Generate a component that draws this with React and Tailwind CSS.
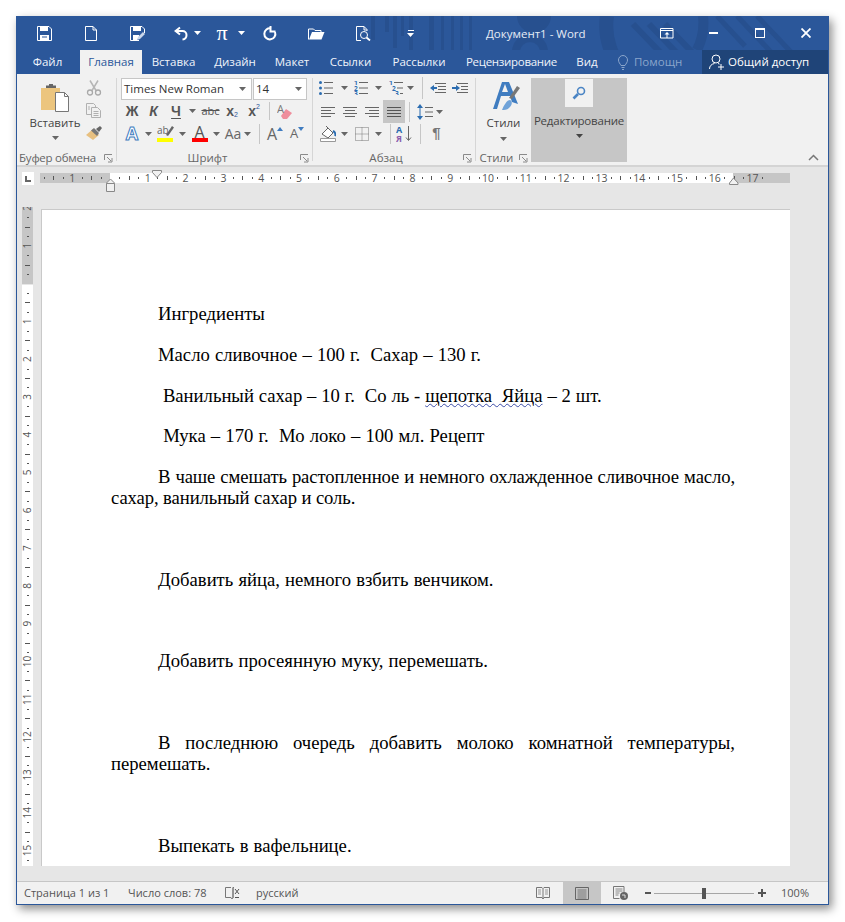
import React from 'react';

const UI = "font-['Open_Sans','Noto_Sans',sans-serif]";

const Ic = ({ w = 16, h = 16, className = '', children }) => (
  <svg width={w} height={h} viewBox={`0 0 ${w} ${h}`} fill="none" className={`shrink-0 ${className}`}>
    {children}
  </svg>
);

const Caret = ({ color = '#666', className = '' }) => (
  <svg width="7" height="4" viewBox="0 0 7 4" className={`shrink-0 ${className}`}>
    <path d="M0 0h7L3.5 4z" fill={color} />
  </svg>
);

const Launcher = () => (
  <svg width="9" height="9" viewBox="0 0 9 9" className="absolute right-[3px] top-[2px]">
    <path d="M.5 6V.5H8M3 3l4 4M8 4v4H4" stroke="#8a8a8a" fill="none" />
  </svg>
);

const Cell = ({ className = '', children }) => (
  <div className={`flex items-center justify-center shrink-0 ${className}`}>{children}</div>
);

const Lines = ({ rows, stroke = '#666' }) => (
  <Ic w={14} h={12}>
    {rows.map(([x1, x2], i) => (
      <path key={i} d={`M${x1} ${1.5 + i * 3}H${x2}`} stroke={stroke} />
    ))}
  </Ic>
);

const Sep = ({ className = '' }) => <div className={`w-px bg-[#c6c6c6] shrink-0 ${className}`} />;

const Titlebar = () => (
  <div className="relative flex h-[34px] items-center overflow-hidden bg-[#2b579a] text-white">
    <svg width="811" height="58" viewBox="0 0 811 58" className="absolute left-0 top-0">
      <g fill="#27508f">
        <path d="M354 0h4v24h-4zM368 0h4v16h-4zM376 0h4v32h-4zM384 0h3v20h-3zM392 0h4v40h-4zM412 0h5v34h-5zM424 0h3v40h-3zM434 0h3v44h-3zM443 0h3v46h-3zM452 0h3v46h-3z" />
        <path d="M500 0h34a17 17 0 0 1-34 0z" />
      </g>
      <g fill="none" stroke="#27508f">
        <circle cx="513" cy="36" r="14" strokeWidth="8" />
        <path d="M590 0a66 66 0 0 0 20 58" strokeWidth="14" />
        <path d="M616 8l48 50M632 8l48 50M648 8l48 50" strokeWidth="6" />
        <path d="M700 0l28 30M720 0l34 36M740 0l34 36" strokeWidth="5" />
        <path d="M686 0a60 60 0 0 1-6 34" strokeWidth="10" />
      </g>
    </svg>

    <div className="relative flex items-center pl-[20px]">
      <Cell className="w-[15px]">
        <Ic w={15} h={15}>
          <path d="M.5.5h11.5l2.5 2.5v11.5H.5z" stroke="#fff" />
          <path d="M3 1h8v4H3zM3 9h9v5H3z" fill="#fff" />
          <path d="M5 11h5" stroke="#2b579a" />
        </Ic>
      </Cell>
      <Cell className="ml-[32px] w-[13px]">
        <Ic w={12} h={15}>
          <path d="M.5.5h7.5l3.5 3.5v10.5H.5zM8 .5V4h3.5" stroke="#fff" />
        </Ic>
      </Cell>
      <Cell className="ml-[33px] w-[15px]">
        <Ic w={15} h={15}>
          <path d="M9 14.500H.5V.5H12l2.500 2.500V7" stroke="#fff" />
          <path d="M3 1h8v4H3zM3 9h6v2l-2 3H3z" fill="#fff" />
          <path d="M7 14l1-3 5-5 2 2-5 5z" fill="#c9d6ea" />
        </Ic>
      </Cell>
      <Cell className="ml-[28px] w-[16px]">
        <Ic w={15} h={15}>
          <path d="M6 1.500L1.500 5 6 8.500" stroke="#fff" strokeWidth="2" />
          <path d="M2 5h6.500a4 4 0 0 1 4 4 4.500 4.500 0 0 1-4 4.500" stroke="#fff" strokeWidth="2" />
        </Ic>
      </Cell>
      <Caret color="#fff" className="ml-[5px]" />
      <Cell className="ml-[14px] w-[14px] h-[16px] font-['Liberation_Serif',serif] text-[22px] leading-none">π</Cell>
      <Caret color="#fff" className="ml-[9px]" />
      <Cell className="ml-[18px] w-[14px]">
        <Ic w={14} h={15}>
          <path d="M8 2.500A5.500 5.500 0 1 0 12 6" stroke="#fff" strokeWidth="2" />
          <path d="M7.500 0v5.500h5" stroke="#fff" strokeWidth="2" />
        </Ic>
      </Cell>
      <Cell className="ml-[31px] w-[17px]">
        <Ic w={17} h={13}>
          <path d="M.5 12.500V2h5l1.500 1.500h6V5" stroke="#fff" />
          <path d="M1 12.500L4 5h12.500l-3 7.500z" fill="#fff" />
        </Ic>
      </Cell>
      <Cell className="ml-[31px] w-[15px]">
        <Ic w={15} h={15}>
          <path d="M5 14.500H.5V.5H8l3 3V5M8 .5V4h3" stroke="#fff" />
          <circle cx="8" cy="9" r="3.500" stroke="#fff" />
          <path d="M10.500 11.500l3.500 3" stroke="#fff" strokeWidth="1.800" />
        </Ic>
      </Cell>
      <Cell className="ml-[36px] w-[7px] flex-col gap-[2px]">
        <div className="h-px w-[6px] bg-white" />
        <Caret color="#fff" />
      </Cell>
    </div>

    <div className={`${UI} absolute left-[469px] top-[10px] text-[11.5px] leading-[16px] text-[#e6ecf5]`}>
      Документ1 - Word
    </div>

    <div className="relative ml-auto flex items-center pr-[17px]">
      <Ic w={14} h={11}>
        <path d="M.5.5h12.500v9.500H.5zM.5 2.500H13" stroke="#fff" />
        <path d="M7 4l2.500 2.500h-5zM6.500 6h1v4h-1z" fill="#fff" />
      </Ic>
      <div className="ml-[35px] h-[2px] w-[9px] bg-white" />
      <div className="ml-[37px] h-[10px] w-[10px] border border-t-2 border-white" />
      <Ic w={10} h={10} className="ml-[36px]">
        <path d="M.5.500l9 9M9.500.5l-9 9" stroke="#fff" strokeWidth="1.800" />
      </Ic>
    </div>
  </div>
);

const tabs = [
  ['Файл', 'w-[63px] pr-[2px]'],
  ['Главная', 'w-[62px] bg-[#f1f1f1] !text-[#2b579a]'],
  ['Вставка', 'w-[63px]'],
  ['Дизайн', 'w-[60px]'],
  ['Макет', 'w-[54px]'],
  ['Ссылки', 'w-[63px]'],
  ['Рассылки', 'w-[74px]'],
  ['Рецензирование', 'w-[111px] tracking-[-0.3px]'],
  ['Вид', 'w-[40px]'],
];

const Tabs = () => (
  <div className={`${UI} relative flex h-[24px] bg-[#2b579a] text-[11.5px] text-[#f0f4fa]`}>
    {tabs.map(([label, cls]) => (
      <div key={label} className={`flex items-center justify-center ${cls}`}>
        {label}
      </div>
    ))}
    <div className="flex w-[95px] items-center pl-[11px] text-[#8aa5cb]">
      <Ic w={10} h={15}>
        <path d="M3 10.500C2 8.500.5 7.500.5 5a4.500 4.500 0 0 1 9 0c0 2.500-1.500 3.500-2.500 5.500zM3.500 12.500h3M4 14.500h2" stroke="#8aa5cb" />
      </Ic>
      <span className="ml-[6px]">Помощн</span>
    </div>
    <div className="flex flex-1 items-center bg-[#1f4478] pl-[7px] text-white">
      <Ic w={16} h={16}>
        <circle cx="7" cy="5" r="4" stroke="#fff" />
        <path d="M.5 15c0-3 2-5 5-5.500M9 9.500l1.500.5M12 10v6M9 13h6" stroke="#fff" />
      </Ic>
      <span className="ml-[3px]">Общий доступ</span>
    </div>
  </div>
);

const Group = ({ label, labelClass = '', launcher, className = '', children }) => (
  <div className={`my-[4px] flex shrink-0 flex-col border-r border-[#d6d6d6] ${className}`}>
    <div className="h-[74px] shrink-0">{children}</div>
    <div className={`relative flex h-[12px] shrink-0 items-center justify-center text-[11.5px] text-[#666] ${labelClass}`}>
      {label}
      {launcher && <Launcher />}
    </div>
  </div>
);

const Clipboard = () => (
  <Group label="Буфер обмена" labelClass="pr-[18px] tracking-[-0.25px]" launcher className="w-[100px]">
    <div className="flex">
      <div className="flex w-[69px] flex-col items-center pl-[7px] pt-[6px]">
        <Ic w={30} h={28}>
          <path d="M1 4h6V2h7v2h6v22H1z" fill="#ecc57e" />
          <path d="M6 4h10V1.500h-3V0H9v1.500H6z" fill="#666" />
          <path d="M15.500 8.500h9l4 4v15h-13z" fill="#fff" stroke="#777" />
          <path d="M24.500 8.500v4h4" stroke="#777" />
        </Ic>
        <div className="mt-[3px] text-[11.500px] leading-[16px] text-[#444]">Вставить</div>
        <Caret className="mt-[5px]" />
      </div>
      <div className="flex flex-col items-start pt-[1px]">
        <Ic w={16} h={16} className="mt-[1px]">
          <path d="M4 .5l6 10M12 .5l-6 10" stroke="#b5b5b5" strokeWidth="1.500" />
          <circle cx="4" cy="12.500" r="2.500" stroke="#a9a9a9" strokeWidth="1.300" />
          <circle cx="12" cy="12.500" r="2.500" stroke="#a9a9a9" strokeWidth="1.300" />
        </Ic>
        <Ic w={15} h={15} className="mt-[7px]">
          <path d="M.5.5h7l2 2v9H.5z" fill="#f1f1f1" stroke="#b0b0b0" />
          <path d="M5.500 4.500h6l3 3v7h-9z" fill="#f1f1f1" stroke="#b0b0b0" />
          <path d="M7.500 8.500h5M7.500 10.500h5M7.500 12.500h5M2 4h2M2 6h2" stroke="#b0b0b0" />
        </Ic>
        <Ic w={16} h={14} className="mt-[8px]">
          <path d="M0 9l7-6 6 6-6 5z" fill="#e8c080" />
          <path d="M5 4.500L8 2l5 5-2 3z" fill="#777" />
          <path d="M10 3l4-3 2 2-3 4z" fill="#666" />
        </Ic>
      </div>
    </div>
  </Group>
);

const FontGroup = () => (
  <Group label="Шрифт" labelClass="pr-[14px]" launcher className="w-[196px]">
    <div className="flex flex-col pl-[4px]">
      <div className="flex h-[22px]">
        <div className="flex w-[131px] items-center justify-between border border-[#c6c6c6] bg-white pl-[2px] pr-[5px] text-[11.500px] text-[#333]">
          Times New Roman
          <Caret />
        </div>
        <div className="ml-px flex w-[54px] items-center justify-between border border-[#c6c6c6] bg-white pl-[2px] pr-[4px] text-[11.500px] text-[#333]">
          14
          <Caret />
        </div>
      </div>
      <div className="flex h-[22px] items-center text-[#555]">
        <Cell className="w-[22px] font-['Liberation_Sans',sans-serif] text-[14px] font-bold">Ж</Cell>
        <Cell className="w-[21px] font-['Liberation_Sans',sans-serif] text-[14px] font-bold italic">К</Cell>
        <Cell className="w-[24px] font-['Liberation_Sans',sans-serif] text-[14px] font-bold underline underline-offset-2">Ч</Cell>
        <Cell className="w-[8px]"><Caret /></Cell>
        <Cell className="w-[29px] font-['Open_Sans',sans-serif] text-[11px] line-through">abc</Cell>
        <Cell className="w-[14px] font-['Liberation_Sans',sans-serif] text-[14px] font-bold">x<span className="text-[7px] font-normal text-[#2b579a] translate-y-[4px]">2</span></Cell>
        <Cell className="ml-[8px] w-[14px] font-['Liberation_Sans',sans-serif] text-[14px] font-bold">x<span className="text-[7px] font-normal text-[#2b579a] -translate-y-[4px]">2</span></Cell>
        <Sep className="ml-[8px] h-[18px]" />
        <Cell className="ml-[7px] w-[16px]">
          <Ic w={16} h={15}>
            <path d="M9 5l6 4-5 6H6l-2-3z" fill="#ef8e9c" />
            <text x="0" y="9" fontSize="11" fill="#777" fontFamily="Open Sans">A</text>
          </Ic>
        </Cell>
      </div>
      <div className="flex h-[23px] items-center text-[#666]">
        <Cell className="w-[22px] font-['Open_Sans',sans-serif] text-[18px] font-bold text-[#fff] [-webkit-text-stroke:1px_#3f7cc0]">A</Cell>
        <Cell className="w-[10px]"><Caret /></Cell>
        <Cell className="ml-[2px] w-[20px] flex-col">
          <Ic w={17} h={12}>
            <text x="0" y="9" fontSize="10" fill="#666" fontFamily="Open Sans">ab</text>
            <path d="M9 10L15 1l2 1.500-6 8.500z" fill="#666" />
          </Ic>
          <div className="mt-[1px] h-[4px] w-[16px] bg-[#ffff00]" />
        </Cell>
        <Cell className="ml-[3px] w-[8px]"><Caret /></Cell>
        <Cell className="ml-[5px] w-[17px] flex-col">
          <div className="h-[13px] text-[16px] leading-[14px] text-[#555]">A</div>
          <div className="h-[4px] w-[16px] bg-[#ff0000]" />
        </Cell>
        <Cell className="ml-[4px] w-[8px]"><Caret /></Cell>
        <Cell className="ml-[3px] w-[20px] text-[14px]">Aa</Cell>
        <Cell className="w-[8px]"><Caret /></Cell>
        <Sep className="ml-[8px] h-[20px]" />
        <Cell className="ml-[6px] w-[18px] items-end text-[16px] leading-none">
          A<span className="mb-[11px] border-x-[3px] border-b-[4px] border-x-transparent border-b-[#3f7cc0]" />
        </Cell>
        <Cell className="ml-[4px] w-[18px] items-end text-[13px] leading-none">
          A<span className="mb-[9px] border-x-[3px] border-t-[4px] border-x-transparent border-t-[#3f7cc0]" />
        </Cell>
      </div>
    </div>
  </Group>
);

const ListIcon = ({ kind }) => (
  <Ic w={16} h={14}>
    {[1.5, 7, 12.5].map((y, i) => {
      if (kind === 'bullet') {
        return (
          <g key={y}>
            <circle cx="1.500" cy={y} r="1.500" fill="#2b6cb0" />
            <path d={`M5 ${y}h9`} stroke="#666" />
          </g>
        );
      }
      const left = kind === 'multi' ? i * 3 : 0;
      return (
        <g key={y}>
          <text x={left} y={y + 2.5} fontSize="6.500" fontWeight="700" fill="#2b6cb0" fontFamily="Open Sans">{i + 1}</text>
          <path d={`M${left + 5} ${y}h${kind === 'multi' ? 14 - left - 5 : 9}`} stroke="#666" />
        </g>
      );
    })}
  </Ic>
);

const Paragraph = () => (
  <Group label="Абзац" labelClass="pr-[16px]" launcher className="w-[163px]">
    <div className="flex flex-col pl-[6px]">
      <div className="mb-[2px] flex h-[20px] items-center">
        <Cell className="w-[16px]"><ListIcon kind="bullet" /></Cell>
        <Cell className="ml-[3px] w-[12px]"><Caret /></Cell>
        <Cell className="ml-[4px] w-[16px]"><ListIcon kind="num" /></Cell>
        <Cell className="ml-[2px] w-[12px]"><Caret /></Cell>
        <Cell className="ml-[4px] w-[18px]"><ListIcon kind="multi" /></Cell>
        <Cell className="w-[8px]"><Caret /></Cell>
        <Sep className="ml-[8px] h-[22px]" />
        <Cell className="ml-[7px] w-[16px]">
          <Ic w={16} h={12}>
            <path d="M5 1.500h11M8 4.500h8M8 7.500h8M5 10.500h11" stroke="#666" />
            <path d="M0 6l4-3v2h3v2H4v2z" fill="#2b6cb0" />
          </Ic>
        </Cell>
        <Cell className="ml-[6px] w-[16px]">
          <Ic w={16} h={12}>
            <path d="M5 1.500h11M9 4.500h7M9 7.500h7M5 10.500h11" stroke="#666" />
            <path d="M8 6L4 3v2H0v2h4v2z" fill="#2b6cb0" />
          </Ic>
        </Cell>
      </div>
      <div className="flex h-[23px] items-center">
        <Cell className="ml-[2px] w-[14px]"><Lines rows={[[0, 14], [0, 10], [0, 14], [0, 10]]} /></Cell>
        <Cell className="ml-[8px] w-[14px]"><Lines rows={[[0, 14], [2, 12], [0, 14], [2, 12]]} /></Cell>
        <Cell className="ml-[8px] w-[14px]"><Lines rows={[[0, 14], [4, 14], [0, 14], [4, 14]]} /></Cell>
        <Cell className="ml-[4px] h-[23px] w-[22px] bg-[#c6c6c6]"><Lines rows={[[0, 14], [0, 14], [0, 14], [0, 14]]} stroke="#555" /></Cell>
        <Sep className="ml-[4px] h-[20px]" />
        <Cell className="ml-[7px] w-[16px]">
          <Ic w={16} h={16}>
            <path d="M3 2v12" stroke="#2b6cb0" />
            <path d="M3 0l3 4H0zM3 16l3-4H0z" fill="#2b6cb0" />
            <path d="M8 3.500h8M8 8h8M8 12.500h8" stroke="#666" />
          </Ic>
        </Cell>
        <Cell className="ml-[1px] w-[10px]"><Caret /></Cell>
      </div>
      <div className="flex h-[21px] items-center">
        <Cell className="ml-[1px] w-[16px]">
          <Ic w={16} h={16}>
            <path d="M2 8l6-6 5 5-5 5z" fill="#fff" stroke="#666" />
            <path d="M6 0l2 2" stroke="#666" />
            <path d="M13 5c2 1 3 3 2 5" stroke="#2b6cb0" strokeWidth="2" />
            <path d="M.5 12.500h15v3H.5z" fill="#fff" stroke="#999" />
          </Ic>
        </Cell>
        <Cell className="ml-[2px] w-[12px]"><Caret /></Cell>
        <Cell className="ml-[4px] w-[16px]">
          <Ic w={14} h={14}>
            <path d="M.5.5h13v13H.5zM7 .5v13M.5 7h13" stroke="#777" strokeDasharray="1 1" />
          </Ic>
        </Cell>
        <Cell className="ml-[2px] w-[12px]"><Caret /></Cell>
        <Sep className="ml-[6px] h-[20px]" />
        <Cell className="ml-[5px] w-[18px]">
          <Ic w={18} h={17}>
            <text x="0" y="8" fontSize="9" fontWeight="700" fill="#2b6cb0" fontFamily="Open Sans">А</text>
            <text x="0" y="16.500" fontSize="9" fontWeight="700" fill="#8a5cad" fontFamily="Open Sans">Я</text>
            <path d="M12.500 1v14M10 12.500l2.500 3 2.500-3" stroke="#666" />
          </Ic>
        </Cell>
        <Sep className="ml-[6px] h-[20px]" />
        <Cell className="ml-[10px] w-[11px] font-['Liberation_Sans',sans-serif] text-[15px] font-bold text-[#777]">¶</Cell>
      </div>
    </div>
  </Group>
);

const Styles = () => (
  <Group label="Стили" labelClass="pr-[14px]" launcher className="w-[55px] !border-r-0">
    <div className="flex flex-col items-center pt-[1px]">
      <Ic w={32} h={32}>
        <path d="M5 30L14 3h7l9 22-6-2-2-6h-9l-4 13z" fill="#3f7cc0" />
        <path d="M14 13h6l-3-8z" fill="#f1f1f1" />
        <path d="M21 19L29 7l3 2-8 11z" fill="#777" />
        <path d="M14 31c2-5 5-10 8-10 3 1 2 6-1 8-2 2-5 2-7 2z" fill="#6fa2d8" />
      </Ic>
      <div className="mt-[4px] text-[11.500px] leading-[16px] text-[#444]">Стили</div>
      <Caret className="mt-[6px]" />
    </div>
  </Group>
);

const Editing = () => (
  <div className="my-[4px] flex h-[84px] w-[96px] shrink-0 flex-col items-center bg-[#c6c6c6]">
    <div className="mt-px flex h-[28px] w-[28px] items-center justify-center bg-[#f1f1f1]">
      <Ic w={14} h={14}>
        <circle cx="9" cy="5" r="3.500" stroke="#4a84c4" strokeWidth="1.600" />
        <path d="M6 8l-4.500 4.500" stroke="#4a84c4" strokeWidth="2.600" />
      </Ic>
    </div>
    <div className="mt-[6px] text-[11.500px] leading-[16px] tracking-[-0.2px] text-[#444]">Редактирование</div>
    <Caret color="#444" className="mt-[5px]" />
  </div>
);

const Ribbon = () => (
  <div className={`${UI} relative flex h-[93px] border-b-2 border-[#d4d4d4] bg-[#f1f1f1]`}>
    <Clipboard />
    <FontGroup />
    <Paragraph />
    <Styles />
    <Editing />
    <svg width="11" height="7" viewBox="0 0 11 7" className="absolute left-[791px] top-[80px]">
      <path d="M1 6l4.500-4.500L10 6" stroke="#777" strokeWidth="1.500" fill="none" />
    </svg>
  </div>
);

const quarter = [];
for (let i = -11; i <= 69; i++) quarter.push(i);

const HRuler = () => {
  const ox = 70;
  const u = 37.8 / 4;
  return (
    <svg width="750" height="26" viewBox="0 0 750 26" className="ml-[23px] shrink-0">
      <rect y="6" width="70" height="10" fill="#c6c6c6" />
      <rect x="70" y="6" width="623" height="10" fill="#fff" />
      <rect x="693" y="6" width="57" height="10" fill="#c6c6c6" />
      {quarter.map((q) => {
        const x = ox + q * u;
        if (x < 1 || x > 748 || q === 0) return null;
        if (q % 4 === 0) {
          return (
            <text key={q} x={x} y="14.500" textAnchor="middle" fontSize="10.500" fill="#555" fontFamily="Open Sans">
              {Math.abs(q / 4)}
            </text>
          );
        }
        if (q % 2 === 0) return <rect key={q} x={Math.round(x)} y="9" width="1" height="4" fill="#555" />;
        return <rect key={q} x={Math.round(x)} y="10" width="1" height="2" fill="#555" />;
      })}
      <path d="M112.500 3.500h9v2l-4.500 5-4.500-5z" fill="#f1f1f1" stroke="#888" />
      <path d="M66.500 16l4-4 4 4v.5h-8z" fill="#f1f1f1" stroke="#888" />
      <path d="M66.500 16.500h8v8h-8z" fill="#f1f1f1" stroke="#888" />
      <path d="M689.500 16l4-5 4.500 5v1.500h-8.500z" fill="#f1f1f1" stroke="#888" />
    </svg>
  );
};

const VRuler = () => {
  const oy = 76.5;
  const u = 37.8 / 4;
  const marks = [];
  for (let q = -8; q <= 61; q++) marks.push(q);
  return (
    <svg width="11" height="659" viewBox="0 0 11 659" className="shrink-0">
      <rect width="11" height="77" fill="#c6c6c6" />
      <rect y="78" width="11" height="581" fill="#fff" />
      {marks.map((q) => {
        const y = oy + q * u;
        if (q === 0) return null;
        if (q % 4 === 0) {
          return (
            <text
              key={q}
              x="5.500"
              y={y + 3.500}
              textAnchor="middle"
              fontSize="10"
              fill="#555"
              fontFamily="Open Sans"
              transform={`rotate(-90 5.500 ${y})`}
            >
              {Math.abs(q / 4)}
            </text>
          );
        }
        if (q % 2 === 0) return <rect key={q} x="3" y={Math.round(y)} width="5" height="1" fill="#555" />;
        return <rect key={q} x="5" y={Math.round(y)} width="2" height="1" fill="#555" />;
      })}
    </svg>
  );
};

const paragraphs = [
  'Ингредиенты',
  'Масло сливочное – 100 г.  Сахар – 130 г.',
  null,
  ' Мука – 170 г.  Мо локо – 100 мл. Рецепт',
  'В чаше смешать растопленное и немного охлажденное сливочное масло, сахар, ванильный сахар и соль.',
  '',
  'Добавить яйца, немного взбить венчиком.',
  '',
  'Добавить просеянную муку, перемешать.',
  '',
  'В последнюю очередь добавить молоко комнатной температуры, перемешать.',
  '',
  'Выпекать в вафельнице.',
];

const Page = () => (
  <div className="mt-[2px] w-[749px] shrink-0 border-l border-t border-[#c9c9c9] bg-white pl-[69px] pr-[55px] pt-[93px] font-['Liberation_Serif',serif] text-[18.67px] leading-[21px] text-black">
    {paragraphs.map((text, i) => (
      <p
        key={i}
        className={`mb-[19.8px] min-h-[21px] whitespace-pre-wrap indent-[47px] text-justify ${
          i === 4 ? 'tracking-[-0.1px]' : i === 2 ? '[word-spacing:0.2px]' : '[word-spacing:0.5px]'
        }`}
      >
        {text === null ? (
          <>
            {' Ванильный сахар – 10 г.  Со ль - '}
            <span className="underline decoration-wavy decoration-[#3b4ba8] decoration-1">щепотка  Яйца</span>
            {' – 2 шт.'}
          </>
        ) : (
          text
        )}
      </p>
    ))}
  </div>
);

const StatusBar = () => (
  <div className={`${UI} flex h-[23px] items-center border-t border-[#c6c6c6] bg-[#f1f1f1] text-[11px] text-[#555]`}>
    <span className="ml-[7px] w-[104px]">Страница 1 из 1</span>
    <span className="w-[97px]">Число слов: 78</span>
    <Ic w={15} h={14}>
      <path d="M6 1.500H.5v10H6l1 1.500 1-1.500M9 1.500h-1v10M8 1.500V12" stroke="#777" />
      <path d="M10 3l4 5M14 3l-4 5M10 11.500h4" stroke="#555" />
    </Ic>
    <span className="ml-[16px]">русский</span>
    <div className="ml-auto flex h-full items-center">
      <Ic w={14} h={14}>
        <path d="M.5 1.500h5.500L7 2.500l1-1h5.500v10H8L7 13l-1-1.500H.5zM7 2.500V13" stroke="#777" />
        <path d="M2 4h3M2 6h3M2 8h3M9 4h3M9 6h3M9 8h3" stroke="#999" />
      </Ic>
      <Cell className="ml-[13px] h-full w-[38px] bg-[#c6c6c6]">
        <Ic w={14} h={13}>
          <path d="M.5.5h13v12H.5z" stroke="#666" />
          <path d="M2.500 3h9M2.500 5h9M2.500 7h9M2.500 9h9M2.500 11h9" stroke="#777" />
        </Ic>
      </Cell>
      <Ic w={15} h={14} className="ml-[12px]">
        <path d="M.5.5h10.500v6M.5.5v12h6" stroke="#777" />
        <path d="M2.500 3h7M2.500 5h7M2.500 7h4M2.500 9h3" stroke="#888" />
        <circle cx="11" cy="10" r="4" fill="#666" />
        <path d="M9 9h3v3" stroke="#ddd" />
      </Ic>
      <div className="ml-[17px] h-[2px] w-[6px] bg-[#555]" />
      <div className="relative ml-[3px] h-px w-[100px] bg-[#a6a6a6]">
        <div className="absolute left-[48px] top-[-5px] h-[11px] w-[4px] bg-[#555]" />
      </div>
      <div className="relative ml-[4px] h-[8px] w-[8px]">
        <div className="absolute top-[3px] h-[2px] w-[8px] bg-[#555]" />
        <div className="absolute left-[3px] h-[8px] w-[2px] bg-[#555]" />
      </div>
      <span className="ml-[15px] mr-[19px]">100%</span>
    </div>
  </div>
);

export default function App() {
  return (
    <div className="h-[922px] w-[845px] bg-white pl-[16px] pt-[16px]">
      <div className="flex h-[889px] w-[813px] flex-col border-x border-b border-[#2b579a] bg-[#e6e6e6] shadow-[3px_4px_9px_rgba(0,0,0,0.45)]">
        <Titlebar />
        <Tabs />
        <Ribbon />
        <div className="relative h-[40px] shrink-0">
          <div className="flex">
            <div className="absolute left-[5px] top-[5px] flex h-[13px] w-[12px] items-center justify-center bg-white">
              <div className="mt-[1px] h-[6px] w-[6px] border-b-2 border-l-2 border-[#666]" />
            </div>
            <HRuler />
          </div>
        </div>
        <div className="flex h-[659px] shrink-0 overflow-hidden pl-[5px]">
          <VRuler />
          <div className="w-[8px] shrink-0" />
          <Page />
        </div>
        <div className="flex-1" />
        <StatusBar />
      </div>
    </div>
  );
}
